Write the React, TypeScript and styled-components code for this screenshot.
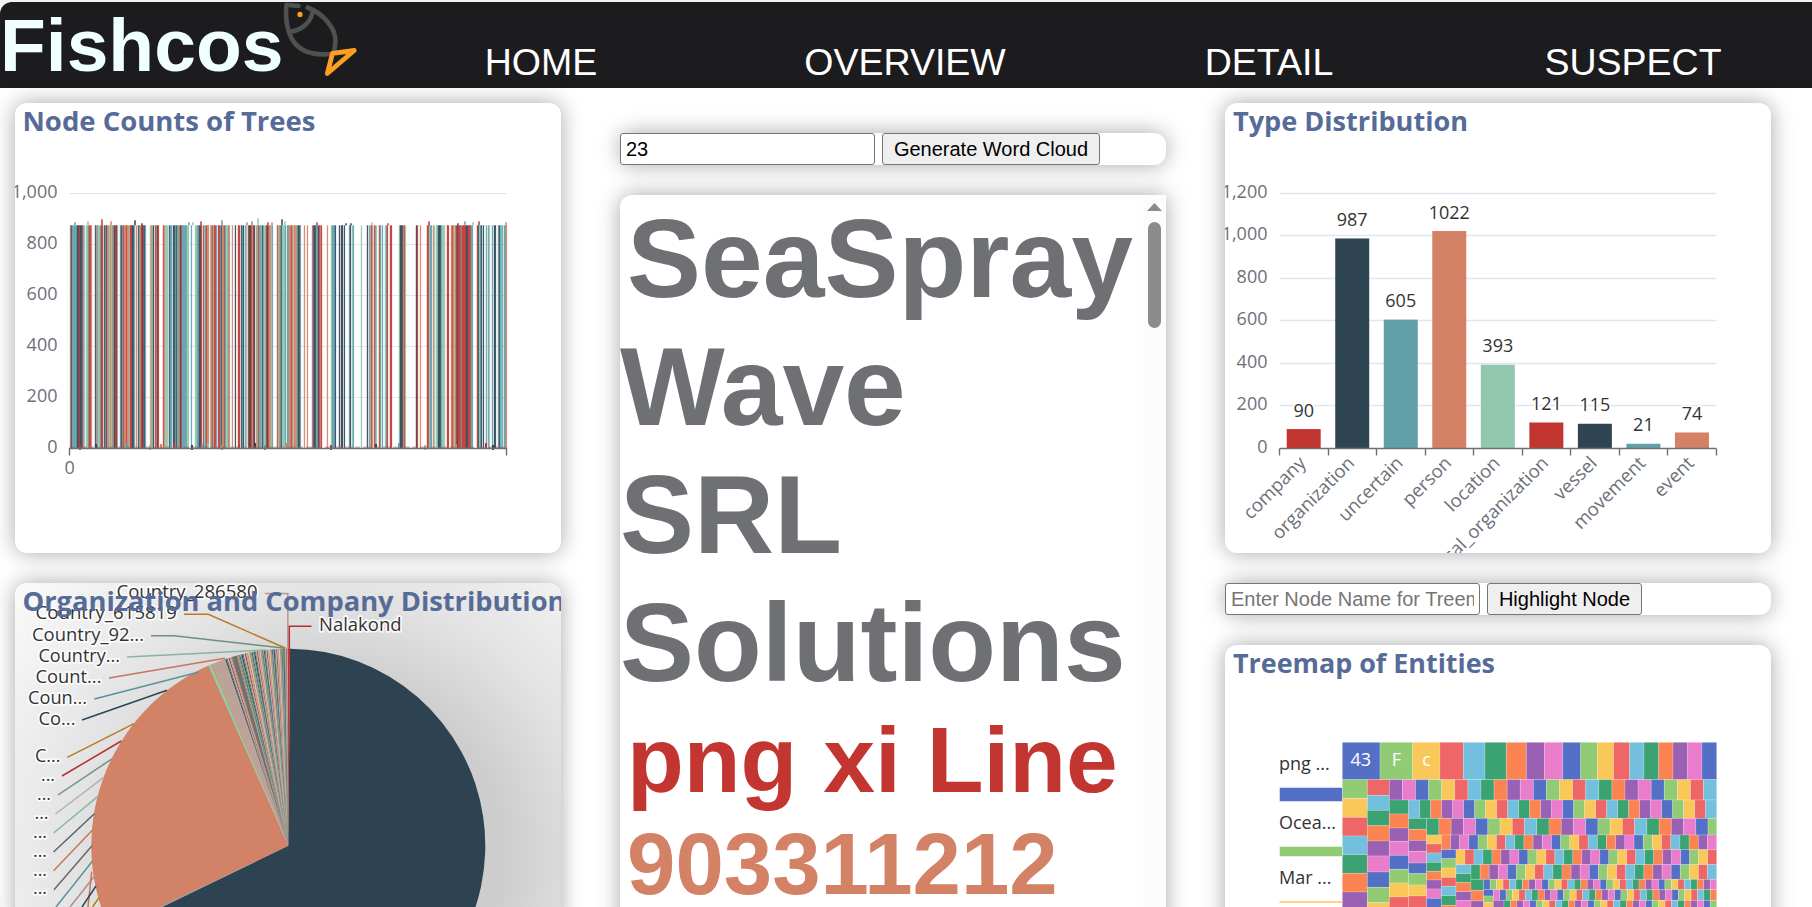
import React from "react";
import styled, { createGlobalStyle } from "styled-components";

const GlobalStyle = createGlobalStyle`
  html, body { margin: 0; height: 907px; overflow: hidden; background: #f2f2f2; }
  * { box-sizing: border-box; }
`;

const Page = styled.div`
  margin-top: 2px;
  height: 905px;
  overflow: hidden;
  background: #fff;
  border-radius: 12px 0 0 12px;
  font-family: "Liberation Sans", Arial, sans-serif;
`;

const Header = styled.header`
  display: flex;
  height: 86px;
  background: #1c1c1e;
  overflow: hidden;
`;

const Brand = styled.div`
  display: flex;
  flex: none;
  width: 359px;
`;

const BrandName = styled.h1`
  margin: 0;
  width: 283px;
  font-size: 75px;
  line-height: 86px;
  font-weight: 700;
  color: #f0ffff;
`;

const Nav = styled.nav`
  display: grid;
  flex: none;
  grid-template-columns: repeat(4, 364px);
`;

const NavLink = styled.a`
  padding-top: 39px;
  text-align: center;
  font-size: 37.5px;
  line-height: 43px;
  color: #fff;
`;

const Columns = styled.main`
  display: grid;
  grid-template-columns: repeat(3, 605px);
  padding-left: 15px;
`;

const Column = styled.div<{ $top: number }>`
  display: flex;
  flex-direction: column;
  gap: 30px;
  width: 546px;
  padding-top: ${(p) => p.$top}px;
`;

const Card = styled.section<{ $height: number }>`
  flex: none;
  height: ${(p) => p.$height}px;
  border-radius: 12px;
  background: #fff;
  box-shadow: 0 0 22.5px rgba(0, 0, 0, 0.35);
  overflow: hidden;
`;

const CloudCard = styled(Card)`
  display: flex;
  border-top-right-radius: 0;
`;

const Chart = styled.svg`
  display: block;
  width: 546px;
  height: 100%;
  font-family: "Open Sans", "Noto Sans", sans-serif;
  font-size: 18px;
`;

const Toolbar = styled.form`
  display: flex;
  flex: none;
  gap: 7px;
  height: 32px;
  border-radius: 12px;
  background: #fff;
  box-shadow: 0 0 22.5px rgba(0, 0, 0, 0.35);
`;

const TextField = styled.input`
  width: 255px;
  height: 32px;
  padding: 0 5px;
  border: 1px solid #767676;
  border-radius: 3px;
  background: #fff;
  font: 20px "Liberation Sans", Arial, sans-serif;
  color: #000;
  &::placeholder { color: #757575; }
`;

const Button = styled.button<{ $width: number }>`
  width: ${(p) => p.$width}px;
  height: 32px;
  padding: 0;
  border: 1px solid #767676;
  border-radius: 3px;
  background: #efefef;
  font: 20px "Liberation Sans", Arial, sans-serif;
  white-space: nowrap;
  color: #000;
`;

const Cloud = styled.div`
  width: 523px;
  font-weight: 700;
`;

const Word = styled.div<{ $size: number; $line: number; $color: string }>`
  font-size: ${(p) => p.$size}px;
  line-height: ${(p) => p.$line}px;
  color: ${(p) => p.$color};
  text-indent: 7px;
`;

const ScrollTrack = styled.div`
  display: flex;
  flex-direction: column;
  align-items: center;
  width: 23px;
  padding-top: 8px;
  background: #fcfcfc;
`;

const ScrollArrow = styled.svg`
  width: 15px;
  height: 8px;
  margin-bottom: 11px;
`;

const ScrollThumb = styled.div`
  width: 13px;
  height: 106px;
  border-radius: 7px;
  background: #8b8b8b;
`;

const AXIS = "#6e7079";
const GRID = "#e0e6f1";

const FishLogo = () => (
  <svg width="76" height="86" viewBox="283 2 76 86" fill="none" strokeLinecap="round" strokeLinejoin="round">
    <g stroke="#505050" strokeWidth="4.6">
      <path d="M298.5 6 L286.5 4.8 C285.6 14 286 26 290.5 36 C297 51 312 56 332 54" />
      <path d="M307.5 7.5 C322 13 336 27 335.5 42 L334 52" />
      <path d="M312.5 12 C311 22 302 30 291 31.5" />
    </g>
    <circle cx="300" cy="14.4" r="2.6" fill="#ff9f22" />
    <path d="M332.5 53.3 L354.2 50.5 L327.3 73.5 Z" stroke="#ff9f22" strokeWidth="4.8" />
  </svg>
);

const Title = ({ x, y, width, children }: { x: number; y: number; width: number; children: string }) => (
  <text x={x} y={y} fontSize="27" fontWeight="700" fill="#576b98" textLength={width} lengthAdjust="spacingAndGlyphs">
    {children}
  </text>
);

/* One letter per bar column: the series colour, or w for a gap. */
const barColors: Record<string, string> = {
  r: "#c23531", n: "#2f4554", t: "#61a0a8", o: "#d48265", g: "#91c7ae",
};
const barColumns = [
  "ontttttnnrnnrt", "gwggtrrowww", "notggtrr", "wntnoogo", "gotnrnow", "wtntrooroogrr", "nntw", "owntornrntw",
  "wwwg", "ognwronrw", "wwwrogggw", "nttwnntntotnrtttt", "tggwwtwwwggt", "tnnrwrgt", "roowgorgrr", "twrrtnoo",
  "rtggto", "wwowwnwwr", "rwntnwtgw", "rnnrornwogrt", "tgntggrn", "roogtw", "wwwrgotngg", "gtwttoorogoootnntww",
  "wowwowwwwt", "rnnttnror", "wwwwwow", "wwgtttnw", "wwnwnnwn", "wwwwtnwgtw", "wwwwwwg", "wwwwwnw", "tgrowrtgwwrt",
  "wtwwgt", "rwwrr", "wwwwwww", "gnnnorgw", "wwwwwwwww", "nrwwow", "wwwww", "rrgttwogwgg", "nnntgggwwr", "rwworog",
  "ornrrrtrrrrnnrrrtt", "wwww", "rngtnwnw", "wtwtgwwtwnn", "wwtntgtwttoo",
].join("").slice(0, 437);
const peaks: [number, number, string][] = [
  [74, 3, "t"], [87, 4, "g"], [101, 6, "r"], [110, 4, "o"], [134, 5, "n"], [141, 2, "n"], [188, 3, "t"], [192, 3, "g"],
  [200, 4, "r"], [221, 5, "t"], [246, 3, "o"], [251, 4, "t"], [257, 7, "g"], [267, 3, "r"], [271, 3, "o"], [281, 6, "n"],
  [284, 4, "g"], [316, 3, "r"], [345, 2, "n"], [350, 2, "n"], [371, 3, "g"], [387, 2, "r"], [428, 4, "r"], [457, 2, "n"],
  [464, 4, "t"], [472, 3, "g"], [478, 4, "r"], [505, 3, "o"],
];
const feet = [79, 95, 126, 149, 160, 173, 191, 201, 207, 221, 238, 254, 264, 270, 285, 330, 375, 398, 424, 455, 485, 492];

const NodeCounts = () => (
  <Chart viewBox="15 103 546 450">
    {[193.5, 244.5, 295.5, 346.5, 397.5].map((y) => (
      <line key={y} x1="69.5" x2="506.5" y1={y} y2={y} stroke={GRID} />
    ))}
    {["1,000", "800", "600", "400", "200", "0"].map((t, i) => (
      <text key={t} x="57.5" y={197.5 + i * 51} textAnchor="end" fill={AXIS}>{t}</text>
    ))}
    {barColumns.split("").map((c, i) =>
      c === "w" ? null : <rect key={i} x={69.8 + i} y="225.3" width="1.3" height="223" fill={barColors[c]} opacity="0.9" />
    )}
    {peaks.map(([x, h, c]) => (
      <rect key={x} x={x} y={225.3 - h} width="2" height={h} fill={barColors[c]} opacity="0.75" />
    ))}
    {feet.map((x, i) => (
      <rect key={x} x={x} y={448 - 3 - (i % 3)} width="2" height="5" fill={barColors["rntgo"[i % 5]]} />
    ))}
    <line x1="70" x2="507" y1="447.2" y2="447.2" stroke="#a0605c" strokeDasharray="5 3 9 2" opacity="0.7" />
    <path d="M69.5 455.5 V448.5 H506.5 V455.5" stroke={AXIS} strokeWidth="1.4" fill="none" />
    <text x="69.7" y="474" textAnchor="middle" fill={AXIS}>0</text>
    <Title x={22.5} y={131} width={293}>Node Counts of Trees</Title>
  </Chart>
);

const CX = 288.3;
const CY = 845.7;
const R = 197;
const seriesPalette = [
  "#c23531", "#2f4554", "#61a0a8", "#d48265", "#91c7ae", "#749f83", "#ca8622", "#bda29a", "#6e7074", "#546570", "#c4ccd3",
];

const sector = (from: number, to: number) => {
  const p = (deg: number) => {
    const a = (deg * Math.PI) / 180;
    return `${(CX + R * Math.sin(a)).toFixed(2)} ${(CY - R * Math.cos(a)).toFixed(2)}`;
  };
  return `M${CX} ${CY} L${p(from)} A${R} ${R} 0 ${to - from > 180 ? 1 : 0} 1 ${p(to)} Z`;
};

const slices: [number, number, string][] = [
  [0.5, 244.1, "#2e4351"],
  [244.1, 244.4, "#61a0a8"],
  [244.4, 336.1, "#d28266"],
  [336.1, 337.0, "#91c7ae"],
  [337.0, 337.3, "#ca8622"],
  [337.3, 341.3, "#bda29a"],
];
let angle = 341.3;
for (let i = 8; angle < 359.9; i++) {
  if (angle > 343.1 && angle < 343.5) {
    slices.push([angle, angle + 1.5, "#6e7074"]);
    angle += 1.5;
    continue;
  }
  const step = angle < 350 ? 0.34 : 0.26;
  slices.push([angle, angle + step, seriesPalette[(i * 7) % 11]]);
  angle += step;
}
slices.push([359.9, 360.5, "#c23531"]);

const leaders: [string, string][] = [
  ["265,593.5 287.8,593.5 287.8,649", "#b59a93"],
  ["311.5,626.3 289.3,626.3 289.3,649", "#b5302d"],
  ["184,614.3 208.3,614.3 285.6,648.3", "#b97b20"],
  ["151,635.7 174,635.7 285,648.2", "#6b9279"],
  ["127,657 266,650", "#85b7a0"],
  ["109,678 225,658.3", "#c3775d"],
  ["94.3,699 198,672.3", "#59939b"],
  ["82,720 167,690.3", "#2f4554"],
  ["67.3,757.3 134,723.7", "#b97b20"],
  ["62,776 121.3,741", "#b5302d"],
  ["58,795 111.7,759", "#6b9279"],
  ["55.5,814 103.6,777.3", "#aeb3ba"],
  ["53.6,833 98.8,795.7", "#85b7a0"],
  ["53.6,852 94.3,813.7", "#546570"],
  ["53.6,870.7 92.5,830", "#c3775d"],
  ["54,889.7 92,845.7", "#66686c"],
  ["56,907 92.5,861", "#59939b"],
  ["70,907 94,876.7", "#a8908a"],
  ["88,907 91.7,871.7", "#c3775d"],
  ["82,907 96,886", "#2f4554"],
  ["92.5,907 99,897.7", "#b97b20"],
];

/* Label text, left edge, baseline, width. */
const pieLabels: [string, number, number, number][] = [
  ["Country_286580", 116.5, 598, 141],
  ["Country_615819", 35.5, 619, 141.5],
  ["Country_92...", 32, 640.5, 112],
  ["Country...", 38.5, 661.5, 81.5],
  ["Count...", 35.5, 682.5, 66],
  ["Coun...", 28, 703.5, 59],
  ["Co...", 38.5, 724.5, 37],
  ["C...", 35, 761.5, 25.5],
  ["...", 41, 781, 14],
  ["...", 37, 800, 14],
  ["...", 34.5, 819, 14],
  ["...", 33, 838, 14],
  ["...", 33, 857, 14],
  ["...", 33, 875.5, 14],
  ["...", 33, 894, 14],
  ["Nalakond", 319, 630.5, 82.5],
];

const Organizations = () => (
  <Chart viewBox="15 583 546 525">
    <defs>
      <radialGradient id="glow" gradientUnits="userSpaceOnUse" cx="335" cy="855" r="420">
        <stop offset="0.4" stopColor="#cdcdcd" />
        <stop offset="0.62" stopColor="#e3e3e3" />
        <stop offset="1" stopColor="#fbfbfb" />
      </radialGradient>
    </defs>
    <rect x="15" y="583" width="546" height="525" fill="url(#glow)" />
    {slices.map(([from, to, color]) => (
      <path key={from} d={sector(from, to)} fill={color} />
    ))}
    {leaders.map(([points, color]) => (
      <polyline key={points} points={points} fill="none" stroke={color} strokeWidth="1.5" />
    ))}
    {pieLabels.map(([t, x, y, w]) => (
      <text key={y} x={x} y={y} textLength={w} lengthAdjust="spacingAndGlyphs" fill="#333" stroke="#fff" strokeOpacity="0.85" strokeWidth="3.5" strokeLinejoin="round" paintOrder="stroke">
        {t}
      </text>
    ))}
    <Title x={22.5} y={611} width={543}>Organization and Company Distribution</Title>
  </Chart>
);

const types: [string, number, string][] = [
  ["company", 90, "#c23531"],
  ["organization", 987, "#2f4554"],
  ["uncertain", 605, "#61a0a8"],
  ["person", 1022, "#d48265"],
  ["location", 393, "#91c7ae"],
  ["political_organization", 121, "#c23531"],
  ["vessel", 115, "#2f4554"],
  ["movement", 21, "#61a0a8"],
  ["event", 74, "#d48265"],
];

const TypeDistribution = () => (
  <Chart viewBox="1225 103 546 450">
    {["1,200", "1,000", "800", "600", "400", "200", "0"].map((t, i) => (
      <g key={t}>
        {i < 6 && <line x1="1279.5" x2="1716.5" y1={193.5 + Math.floor(i * 42.5)} y2={193.5 + Math.floor(i * 42.5)} stroke={GRID} strokeWidth="1.3" />}
        <text x="1267.5" y={197.5 + i * 42.5} textAnchor="end" fill={AXIS}>{t}</text>
      </g>
    ))}
    {types.map(([name, value, color], i) => {
      const cx = 1303.7 + i * 48.53;
      const h = (value * 255) / 1200;
      return (
        <g key={name}>
          <rect x={cx - 17} y={448.2 - h} width="34" height={h} fill={color} />
          <text x={cx} y={435.7 - h} textAnchor="middle" fill="#333" stroke="#fff" strokeWidth="3" paintOrder="stroke">{value}</text>
          <text transform={`translate(${cx - 1} 460) rotate(-45)`} y="6" fontSize="18.5" textAnchor="end" fill={AXIS}>{name}</text>
        </g>
      );
    })}
    <path
      d={"M1279.5 448.5 H1716.5" + Array.from({ length: 10 }, (_, i) => `M${Math.round(1279 + i * 48.53) + 0.5} 448.5 v7`).join("")}
      stroke={AXIS}
      strokeWidth="1.4"
    />
    <Title x={1233} y={131} width={235}>Type Distribution</Title>
  </Chart>
);

const tiles = ["#5470c6", "#91cc75", "#fac858", "#ee6666", "#73c0de", "#3ba272", "#fc8452", "#9a60b4", "#ea7ccc"];
type Cell = [number, number, number, number, number];
const cells: Cell[] = [];

/* Treemap units are thirds of a pixel; strips run along one axis and cycle through the tile colours. */
const edges = (list: number[], a: number, b: number, start: number, vertical: boolean) => {
  for (let i = 0; i < list.length - 1; i++) {
    const c = (start + i) % 9;
    cells.push(vertical ? [a, list[i], b - a, list[i + 1] - list[i], c] : [list[i], a, list[i + 1] - list[i], b - a, c]);
  }
};
const row = (x: number, y0: number, y1: number, count: number, start: number, pitch?: number) => {
  const step = pitch ?? (1460 - x) / count;
  edges(Array.from({ length: count + 1 }, (_, i) => (i === count ? 1460 : x + i * step)), y0, y1, start, false);
};
edges([337, 450, 548, 630, 700, 765, 829, 889, 943, 998, 1052, 1102, 1151, 1199, 1242, 1286, 1329, 1373, 1416, 1460], 67, 179, 0, false);
edges([179, 235, 292, 348, 404, 460, 516, 572], 337, 412, 1, true);
edges([179, 226, 271, 317, 363, 408, 456, 502, 548, 594], 412, 478, 3, true);
row(478, 179, 240, 25, 7);
edges([240, 282, 324, 364, 406, 448, 489, 531, 572], 478, 536, 5, true);
row(536, 240, 295, 28, 4);
edges([295, 328, 361, 394, 429, 461, 495, 528, 562], 536, 590, 5, true);
row(590, 295, 345, 24, 5, 36.7);
edges([345, 372, 399, 427, 454, 480, 507, 535, 562], 590, 634, 2, true);
row(634, 345, 389, 30, 6);
edges([389, 416, 444, 472, 499, 527, 556, 583], 634, 678, 0, true);
row(678, 389, 434, 29, 2);
edges([434, 461, 488, 515, 542, 569], 678, 723, 4, true);
row(723, 434, 478, 27, 5);
edges([478, 511, 543, 575], 723, 761, 5, true);
row(761, 478, 509, 36, 0);
edges([509, 528, 548, 568], 761, 790, 0, true);
row(790, 509, 541, 35, 8);
edges([541, 570], 790, 822, 7, true);
row(822, 541, 573, 33, 5);

const Treemap = () => (
  <Chart viewBox="1225 645 546 525">
    {cells.map(([x, y, w, h, c], i) => (
      <rect key={i} x={1230 + x / 3} y={720 + y / 3} width={w / 3} height={h / 3} fill={tiles[c]} stroke="#fff" strokeOpacity="0.24" strokeWidth="0.8" />
    ))}
    <g fill="#fff" textAnchor="middle">
      <text x="1360.8" y="766">43</text>
      <text x="1396.3" y="766">F</text>
      <text x="1426.5" y="766">c</text>
    </g>
    <g fill="#333">
      <text x="1279" y="770">png ...</text>
      <text x="1279" y="829">Ocea...</text>
      <text x="1279" y="884">Mar ...</text>
    </g>
    <g stroke="#fff" strokeOpacity="0.45">
      <rect x="1279.5" y="787.5" width="63" height="14" fill="#5470c6" />
      <rect x="1279.5" y="846.5" width="63" height="10" fill="#91cc75" />
    </g>
    <rect x="1279.5" y="901" width="63" height="2" fill="#fac858" opacity="0.75" />
    <Title x={1233} y={673} width={262}>Treemap of Entities</Title>
  </Chart>
);

export default function App() {
  return (
    <>
      <GlobalStyle />
      <Page>
        <Header>
          <Brand>
            <BrandName>Fishcos</BrandName>
            <FishLogo />
          </Brand>
          <Nav>
            {["HOME", "OVERVIEW", "DETAIL", "SUSPECT"].map((label) => (
              <NavLink key={label}>{label}</NavLink>
            ))}
          </Nav>
        </Header>
        <Columns>
          <Column $top={15}>
            <Card $height={450}><NodeCounts /></Card>
            <Card $height={525}><Organizations /></Card>
          </Column>
          <Column $top={45}>
            <Toolbar>
              <TextField defaultValue="23" />
              <Button type="button" $width={218}>Generate Word Cloud</Button>
            </Toolbar>
            <CloudCard $height={900}>
              <Cloud>
                <Word $size={111} $line={128} $color="#6e7074">SeaSpray Wave SRL Solutions</Word>
                <Word $size={93} $line={107} $color="#c23531">png xi Line</Word>
                <Word $size={87} $line={100} $color="#d48265">903311212</Word>
              </Cloud>
              <ScrollTrack>
                <ScrollArrow viewBox="0 0 15 8"><path d="M0 8 L7.5 0 L15 8 Z" fill="#8b8b8b" /></ScrollArrow>
                <ScrollThumb />
              </ScrollTrack>
            </CloudCard>
          </Column>
          <Column $top={15}>
            <Card $height={450}><TypeDistribution /></Card>
            <Toolbar>
              <TextField placeholder="Enter Node Name for Treemap" />
              <Button type="button" $width={155}>Highlight Node</Button>
            </Toolbar>
            <Card $height={525}><Treemap /></Card>
          </Column>
        </Columns>
      </Page>
    </>
  );
}
